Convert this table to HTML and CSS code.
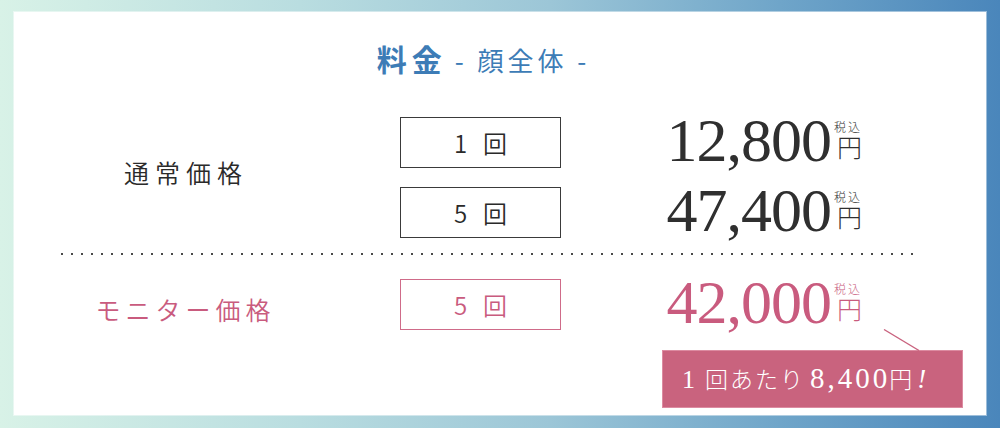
FILE: index.html
```html
<!DOCTYPE html>
<html lang="ja">
<head>
<meta charset="utf-8">
<title>料金 - 顔全体 -</title>
<link rel="stylesheet" href="styles.css">
</head>
<body>
<div class="frame">
  <div class="panel">
    <h2 class="title"><span class="title-main">料金</span><span class="title-sub">- 顔全体 -</span></h2>

    <div class="table">
      <div class="group">
        <div class="label label-normal">通常価格</div>
        <div class="rows">
          <div class="row">
            <div class="count"><span class="count-num">1</span>回</div>
            <div class="price">12,800<span class="unit"><span class="tax">税込</span><span class="yen">円</span></span></div>
          </div>
          <div class="row">
            <div class="count"><span class="count-num">5</span>回</div>
            <div class="price">47,400<span class="unit"><span class="tax">税込</span><span class="yen">円</span></span></div>
          </div>
        </div>
      </div>

      <div class="divider"></div>

      <div class="group group-monitor">
        <div class="label label-monitor">モニター価格</div>
        <div class="rows">
          <div class="row">
            <div class="count count-monitor"><span class="count-num">5</span>回</div>
            <div class="price price-monitor">42,000<span class="unit"><span class="tax">税込</span><span class="yen">円</span></span></div>
          </div>
        </div>
      </div>
    </div>

    <div class="badge">
      <svg class="pointer" width="37" height="22" viewBox="0 0 37 22" aria-hidden="true"><line x1="1" y1="0.5" x2="36" y2="21.5" stroke="#c9627e" stroke-width="1.3"/></svg>
      <span class="badge-one">1</span><span class="badge-jp">回あたり</span><span class="badge-num">8,400</span><span class="badge-yen">円</span><i class="badge-ex">!</i>
    </div>
  </div>
</div>
</body>
</html>
```

FILE: styles.css
```css
* { box-sizing: border-box; }

html, body {
  margin: 0;
  padding: 0;
}

body {
  width: 1000px;
  height: 428px;
  overflow: hidden;
  font-family: "Noto Sans CJK JP", "Noto Sans", sans-serif;
  color: #333;
}

.frame {
  width: 1000px;
  height: 428px;
  padding: 12px 14px 13px 14px;
  background: linear-gradient(90deg, #d8f2e7 0%, #b9dde0 30%, #9cc6d7 55%, #6fa5c9 78%, #4a86bb 100%);
}

.panel {
  height: 403px;
  background: #fff;
  box-shadow: 0 0 0 1px rgba(255, 255, 255, 0.45);
  padding-top: 26px;
  display: flex;
  flex-direction: column;
}

.title {
  margin: 0;
  height: 40px;
  line-height: 40px;
  text-align: center;
  padding-right: 33px;
  color: #3d7cb6;
  font-weight: normal;
  white-space: nowrap;
}

.title-main {
  font-size: 30px;
  font-weight: bold;
  letter-spacing: 5px;
}

.title-sub {
  font-size: 26px;
  letter-spacing: 4px;
  margin-left: 8px;
}

.table {
  margin: 39px 73px 0 46px;
}

.group {
  display: flex;
  align-items: center;
}

.label {
  width: 246px;
  text-align: center;
  font-size: 25px;
  font-weight: 350;
  line-height: 34px;
  color: #2a2a2a;
  white-space: nowrap;
}

.label-normal {
  letter-spacing: 6px;
  margin-bottom: 11px;
  text-indent: 6px;
}

.label-monitor {
  color: #c95b7e;
  letter-spacing: 5px;
  margin-top: 8px;
  text-indent: 5px;
}

.rows {
  flex: 1;
  display: flex;
  flex-direction: column;
  gap: 19px;
  margin-left: 94px;
}

.row {
  display: flex;
  align-items: flex-start;
  height: 51px;
}

.count {
  width: 161px;
  height: 51px;
  border: 1px solid #3a3a3a;
  display: flex;
  align-items: center;
  justify-content: center;
  font-size: 24px;
  font-weight: 350;
  color: #2a2a2a;
}

.count-num {
  margin-right: 16px;
}

.count-monitor {
  border-color: #cf6b89;
  color: #c95b7e;
}

.price {
  flex: 1;
  text-align: right;
  padding-right: 51px;
  font-family: "Liberation Serif", "Times New Roman", serif;
  font-size: 62px;
  line-height: 46px;
  letter-spacing: -1px;
  color: #2f2f2f;
  white-space: nowrap;
}

.price-monitor {
  color: #c95b7e;
}

.unit {
  display: inline-block;
  vertical-align: 4px;
  margin-left: 3px;
  letter-spacing: 0;
  text-align: left;
  font-family: "Noto Sans CJK JP", sans-serif;
  font-weight: 300;
}

.tax {
  display: block;
  font-size: 12px;
  line-height: 14px;
  letter-spacing: 2px;
}

.yen {
  display: block;
  font-size: 25px;
  line-height: 24px;
  margin-left: 3px;
}

.divider {
  height: 2px;
  margin-top: 15px;
  margin-left: 1px;
  background-image: linear-gradient(90deg, #4a4a4a 0 2px, transparent 2px);
  background-size: 10px 2px;
  background-repeat: repeat-x;
}

.group-monitor {
  margin-top: 24px;
}

.badge {
  position: relative;
  align-self: flex-end;
  margin-top: 20px;
  margin-right: 23px;
  width: 301px;
  height: 58px;
  background: #c9637e;
  border: 1px solid #dc8ba1;
  color: #fff;
  display: flex;
  align-items: baseline;
  padding: 12px 0 0 19px;
  white-space: nowrap;
  line-height: 30px;
}

.pointer {
  position: absolute;
  left: 220px;
  top: -22px;
}

.badge-one {
  font-family: "Liberation Serif", "Times New Roman", serif;
  font-size: 26px;
  margin-right: 10px;
}

.badge-jp {
  font-family: "Noto Sans CJK JP", sans-serif;
  font-weight: 300;
  font-size: 23px;
  letter-spacing: 2px;
}

.badge-num {
  font-family: "Liberation Serif", "Times New Roman", serif;
  font-size: 29px;
  letter-spacing: 3px;
  margin-left: 5px;
}

.badge-yen {
  font-family: "Noto Sans CJK JP", sans-serif;
  font-weight: 300;
  font-size: 23px;
  margin-left: -1px;
}

.badge-ex {
  font-family: "Liberation Serif", "Times New Roman", serif;
  font-size: 27px;
  margin-left: 5px;
}
```
